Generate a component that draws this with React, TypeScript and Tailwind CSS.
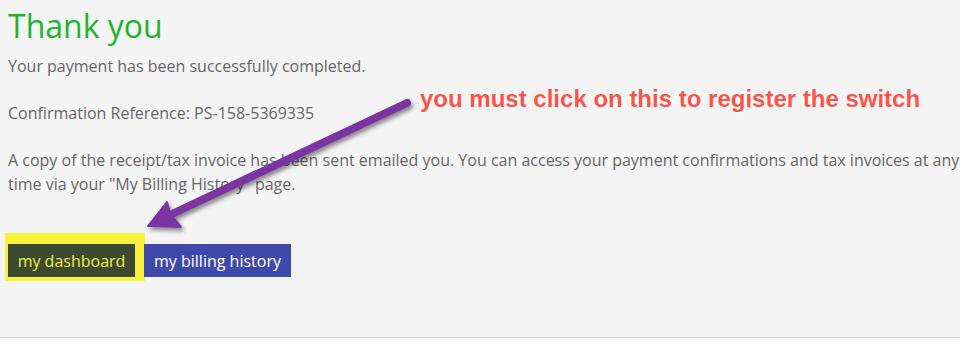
import React from 'react';

const Arrow = () => (
  <svg className="absolute left-0 top-0 pointer-events-none" width="960" height="347" viewBox="0 0 960 347">
    <defs>
      <filter id="shadow" x="-20%" y="-20%" width="140%" height="140%">
        <feDropShadow dx="2" dy="3" stdDeviation="2" floodColor="#000" floodOpacity="0.45" />
      </filter>
    </defs>
    <g filter="url(#shadow)">
      <line x1="407" y1="103" x2="170" y2="215" stroke="#7a35a0" strokeWidth="8" strokeLinecap="round" />
      <path d="M148 226 L167 202 L170 213 L181 227 Z" fill="#7a35a0" stroke="#7a35a0" strokeWidth="2" strokeLinejoin="round" />
    </g>
  </svg>
);

export default function App() {
  return (
    <div className="relative w-[960px] h-[347px] bg-white overflow-hidden" style={{ fontFamily: '"Open Sans", sans-serif' }}>
      <div className="h-[338px] bg-[#f4f4f4] border-b border-[#d9d9d9] px-2 pt-[6px]">
        <h1 className="text-[32px] leading-[40px] text-[#21b32f] font-normal">Thank you</h1>
        <div className="mt-[8px] w-[960px] text-[16px] leading-[24px] text-[#666666] space-y-[23px]">
          <p>Your payment has been successfully completed.</p>
          <p>Confirmation Reference: PS-158-5369335</p>
          <p>
            A copy of the receipt/tax invoice has been sent emailed you. You can access your payment confirmations and tax invoices at any time via your "My Billing History" page.
          </p>
        </div>
        <div className="mt-[48px] flex items-center gap-[9px] relative">
          <div className="absolute left-[-3px] top-[-11px] w-[140px] h-[48px] bg-[#f7f23c]" />
          <button className="relative h-[33px] w-[127px] bg-[#3d4a30] text-[#eef043] text-[16px]">my dashboard</button>
          <button className="relative h-[33px] w-[147px] bg-[#3f49a9] text-white text-[16px]">my billing history</button>
        </div>
      </div>
      <Arrow />
      <div
        className="absolute left-[420px] top-[85px] text-[24px] leading-[28px] font-bold text-[#ff5246] whitespace-nowrap"
        style={{ fontFamily: '"Liberation Sans", Arial, sans-serif', textShadow: '0 0 2px #fff, 0 0 2px #fff, 0 0 3px #fff, 0 0 3px #fff' }}
      >
        you must click on this to register the switch
      </div>
    </div>
  );
}
